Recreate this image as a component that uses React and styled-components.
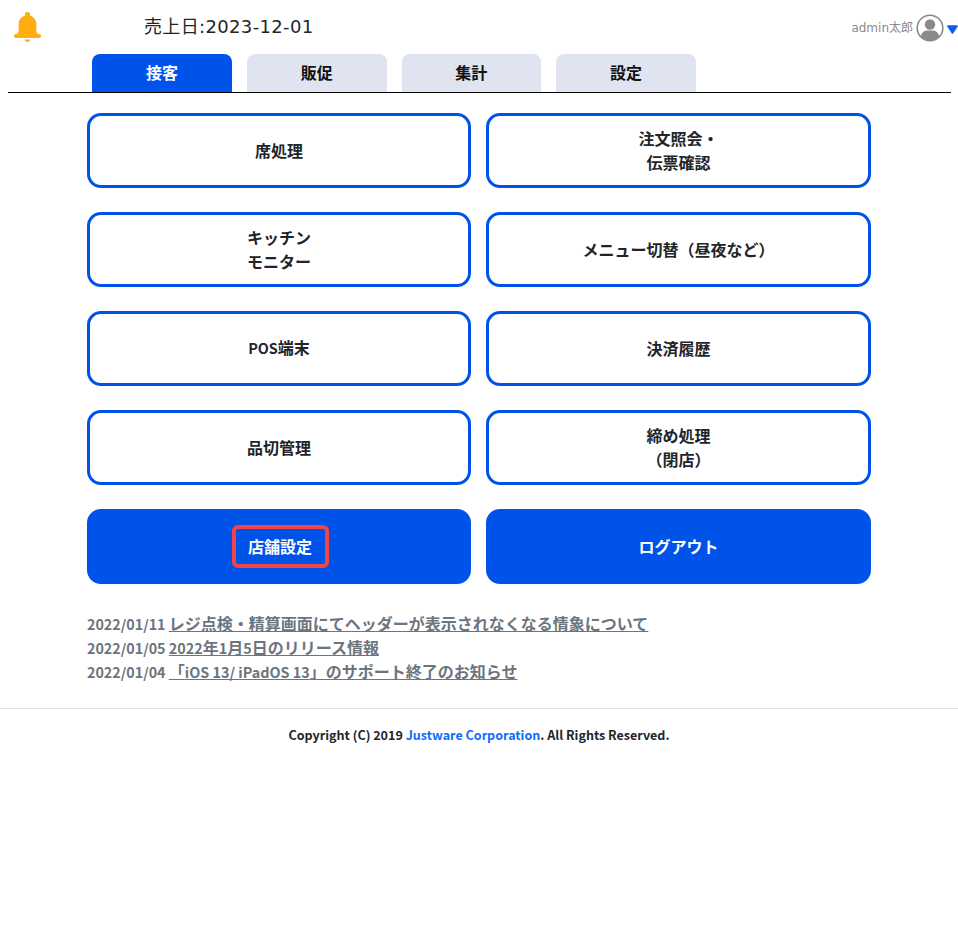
import React from 'react';
import styled, { createGlobalStyle } from 'styled-components';

const GlobalStyle = createGlobalStyle`
  html, body {
    margin: 0;
    padding: 0;
    background: #fff;
    font-family: "Noto Sans CJK JP", "Noto Sans", sans-serif;
    color: #212529;
  }
`;

const Page = styled.div`
  width: 958px;
  height: 951px;
  overflow: hidden;
`;

const Header = styled.header`
  height: 54px;
  display: flex;
  align-items: flex-start;
`;

const BellWrap = styled.div`
  width: 144px;
  padding: 12px 0 0 13px;
  box-sizing: border-box;
  line-height: 0;
`;

const SalesDate = styled.div`
  margin-top: 15px;
  font-family: "DejaVu Sans", "Noto Sans CJK JP", sans-serif;
  font-size: 18px;
  line-height: 24px;
  letter-spacing: 0.35px;
  color: #212529;
`;

const User = styled.div`
  margin-left: auto;
  margin-top: 14px;
  display: flex;
  align-items: center;
  height: 28px;
  font-family: "DejaVu Sans", "Noto Sans CJK JP", sans-serif;
  font-size: 12px;
  color: #8a8a8a;
`;

const UserName = styled.span`
  margin-right: 3px;
  padding-bottom: 3px;
`;

const TabBar = styled.nav`
  margin: 0 7px 0 8px;
  padding-left: 84.2px;
  height: 38px;
  display: flex;
  gap: 14.97px;
  border-bottom: 1px solid #000;
`;

const Tab = styled.div`
  width: 139.7px;
  height: 38px;
  padding-bottom: 2px;
  box-sizing: border-box;
  border-radius: 8px 8px 0 0;
  display: flex;
  align-items: center;
  justify-content: center;
  font-size: 16px;
  font-weight: 700;
  background: ${p => (p.$active ? '#0053e9' : '#dfe4f0')};
  color: ${p => (p.$active ? '#fff' : '#111')};
`;

const Menu = styled.main`
  margin: 20px 87px 0;
  width: 784px;
  display: grid;
  grid-template-columns: 384px 385px;
  grid-auto-rows: 75px;
  column-gap: 15px;
  row-gap: 24px;
`;

const MenuButton = styled.div`
  box-sizing: border-box;
  border: 3px solid #0053e9;
  border-radius: 14px;
  padding-bottom: 2px;
  background: ${p => (p.$solid ? '#0053e9' : '#fff')};
  color: ${p => (p.$solid ? '#fff' : '#212529')};
  display: flex;
  align-items: center;
  justify-content: center;
  text-align: center;
  font-size: 16px;
  font-weight: 700;
  line-height: 24px;
`;

const Focused = styled.span`
  box-sizing: border-box;
  width: 97px;
  height: 43px;
  margin: 2px 0 0 2px;
  padding-bottom: 2px;
  border: 4px solid #f44545;
  border-radius: 6px;
  display: flex;
  align-items: center;
  justify-content: center;
`;

const Latin = styled.span`
  font-size: 14.4px;
`;

const NewsDate = styled.span`
  font-size: 14.3px;
`;

const News = styled.ul`
  list-style: none;
  margin: 27px 87px 0;
  padding: 0;
`;

const NewsItem = styled.li`
  height: 24px;
  font-size: 16px;
  font-weight: 700;
  line-height: 24px;
  color: #6c757d;
`;

const NewsLink = styled.a`
  color: #6c757d;
  text-decoration: underline;
`;

const Footer = styled.footer`
  margin-top: 25px;
  border-top: 1px solid #e4e4e4;
  padding-top: 16px;
  text-align: center;
  font-size: 12.55px;
  font-weight: 700;
  line-height: 20px;
  color: #212529;
`;

const Company = styled.span`
  color: #0d6efd;
`;

const Bell = () => (
  <svg width="29" height="30" viewBox="0 0 29 30">
    <path fill="#ffae12" d="M14.500 0a2.600 2.600 0 0 1 2.600 2.600v1.200c3.900 1 6.300 4.300 6.300 8.500v6.200c0 1.600.6 3 2 4.200H3.600c1.400-1.200 2-2.600 2-4.200v-6.200c0-4.200 2.400-7.500 6.300-8.500V2.600A2.600 2.600 0 0 1 14.500 0z" />
    <rect fill="#ffae12" x="1" y="22" width="27" height="4" rx="2" />
    <path fill="#ffae12" d="M11.500 27.500h6c-.4 1.400-1.600 2.300-3 2.300s-2.600-.9-3-2.300z" />
  </svg>
);

const UserIcon = () => (
  <svg width="28" height="28" viewBox="0 0 28 28">
    <circle cx="14" cy="14" r="12.800" fill="#fff" stroke="#8a8a8a" strokeWidth="1.600" />
    <circle cx="14" cy="10.500" r="5.200" fill="#8a8a8a" />
    <path fill="#8a8a8a" d="M4.800 22.500c.8-4 3.600-6 6.400-6h5.600c2.800 0 5.600 2 6.400 6a12.400 12.400 0 0 1-18.400 0z" />
  </svg>
);

const CaretBox = styled.span`
  width: 14px;
  padding-top: 3px;
  display: flex;
  justify-content: flex-end;
`;

const Caret = () => (
  <CaretBox>
    <svg width="11" height="9" viewBox="0 0 11 9">
      <path fill="#0a5cf5" stroke="#0a5cf5" strokeWidth="2" strokeLinejoin="round" d="M1.200 1.200h8.600L5.500 7.800z" />
    </svg>
  </CaretBox>
);

const tabs = ['接客', '販促', '集計', '設定'];

const newsList = [
  { date: '2022/01/11', title: ['レジ点検・精算画面にてヘッダーが表示されなくなる情象について'] },
  { date: '2022/01/05', title: [<Latin key="y">2022</Latin>, '年', <Latin key="m">1</Latin>, '月', <Latin key="d">5</Latin>, '日のリリース情報'] },
  { date: '2022/01/04', title: ['「', <Latin key="i">iOS 13/ iPadOS 13</Latin>, '」のサポート終了のお知らせ'] },
];

const App = () => (
  <Page>
    <GlobalStyle />
    <Header>
      <BellWrap><Bell /></BellWrap>
      <SalesDate>売上日:2023-12-01</SalesDate>
      <User>
        <UserName>admin太郎</UserName>
        <UserIcon />
        <Caret />
      </User>
    </Header>
    <TabBar>
      {tabs.map((t, i) => <Tab key={t} $active={i === 0}>{t}</Tab>)}
    </TabBar>
    <Menu>
      <MenuButton>席処理</MenuButton>
      <MenuButton>注文照会・<br />伝票確認</MenuButton>
      <MenuButton>キッチン<br />モニター</MenuButton>
      <MenuButton>メニュー切替（昼夜など）</MenuButton>
      <MenuButton><span><Latin>POS</Latin>端末</span></MenuButton>
      <MenuButton>決済履歴</MenuButton>
      <MenuButton>品切管理</MenuButton>
      <MenuButton>締め処理<br />（閉店）</MenuButton>
      <MenuButton $solid><Focused>店舗設定</Focused></MenuButton>
      <MenuButton $solid>ログアウト</MenuButton>
    </Menu>
    <News>
      {newsList.map(n => (
        <NewsItem key={n.date}>
          <NewsDate>{n.date} </NewsDate><NewsLink>{n.title}</NewsLink>
        </NewsItem>
      ))}
    </News>
    <Footer>
      Copyright (C) 2019 <Company>Justware Corporation</Company>. All Rights Reserved.
    </Footer>
  </Page>
);

export default App;
